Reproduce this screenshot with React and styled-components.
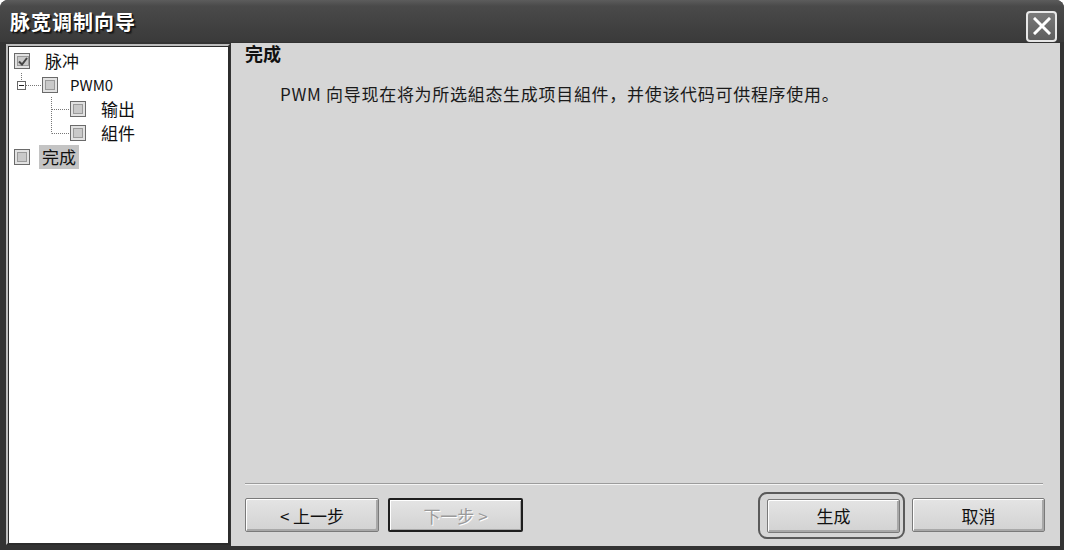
import React from 'react';
import styled, { createGlobalStyle } from 'styled-components';

const GlobalStyle = createGlobalStyle`
    body {
        margin: 0;
        background: #ffffff;
        font-family: "Noto Sans CJK SC", "Noto Sans", sans-serif;
    }
`

const Window = styled.div`
    width: 1064px;
    height: 550px;
    display: flex;
    flex-direction: column;
    background: #333333;
    border-radius: 8px 8px 0 0;
    overflow: hidden;
`

const TitleBar = styled.div`
    height: 42px;
    display: flex;
    align-items: center;
    justify-content: space-between;
    padding: 0 7px 0 10px;
    background: linear-gradient(#5c5c5c 0px, #4a4a4a 6px, #414141 60%, #3a3a3a 100%);
    box-sizing: border-box;
`

const Title = styled.div`
    color: #ffffff;
    font-size: 20px;
    font-weight: bold;
    text-shadow: 1px 1px 0 #111111, 2px 2px 1px #222222;
    letter-spacing: 1px;
`

const CloseButton = styled.div`
    width: 31px;
    height: 31px;
    box-sizing: border-box;
    border: 2px solid #e8e8e8;
    border-radius: 4px;
    background: linear-gradient(#7a7a7a, #5e5e5e);
    display: flex;
    align-items: center;
    justify-content: center;
    margin-top: 10px;
`

const Body = styled.div`
    flex: 1;
    display: flex;
    padding: 1px 4px 4px 5px;
    min-height: 0;
`

const TreePane = styled.div`
    width: 224px;
    box-sizing: border-box;
    background: #ffffff;
    border: 2px solid #2c2c2c;
    border-top-color: #bdbdbd;
    border-left-color: #bdbdbd;
    box-shadow: inset 1px 1px 0 #2c2c2c;
    padding: 3px 0 0 6px;
    margin: 1px;
`

const Row = styled.div`
    height: 24px;
    display: flex;
    align-items: center;
`

const Gutter = styled.svg`
    flex: none;
    display: block;
`

const Box = styled.div`
    flex: none;
    width: 16px;
    height: 16px;
    box-sizing: border-box;
    border: 1px solid #6a6a6a;
    background: #e2e2e2;
    padding: 2px;
    display: flex;
`

const BoxInner = styled.div`
    flex: 1;
    border: 1px solid #9a9a9a;
    background: #c9c9c9;
    display: flex;
    align-items: center;
    justify-content: center;
`

const Label = styled.span`
    margin-left: ${({ $gap }) => $gap || 12}px;
    font-size: ${({ $latin }) => ($latin ? 15 : 17)}px;
    color: #111111;
    line-height: 24px;
    padding: 0 3px;
    background: ${({ $selected }) => ($selected ? '#c4c4c4' : 'transparent')};
`

const Content = styled.div`
    flex: 1;
    display: flex;
    flex-direction: column;
    background: #d6d6d6;
    padding: 0 15px 7px 14px;
`

const Heading = styled.div`
    font-size: 18px;
    font-weight: bold;
    color: #111111;
    line-height: 24px;
    margin-top: -2px;
`

const Message = styled.div`
    margin: 17px 0 0 35px;
    font-size: 17px;
    letter-spacing: 0.7px;
    color: #1a1a1a;
    line-height: 24px;
`

const Spacer = styled.div`
    flex: 1;
`

const Separator = styled.div`
    height: 0;
    border-top: 1px solid #9c9c9c;
    border-bottom: 1px solid #f4f4f4;
    margin-right: 2px;
`

const ButtonRow = styled.div`
    display: flex;
    align-items: center;
    margin-top: 6px;
    height: 48px;
`

const Button = styled.div`
    width: ${({ $w }) => $w || 134}px;
    height: 34px;
    box-sizing: border-box;
    display: flex;
    align-items: center;
    justify-content: center;
    font-size: 17px;
    background: linear-gradient(#e4e4e4, #d2d2d2);
    border: 1px solid #7a7a7a;
    border-radius: 2px;
    box-shadow: inset 1px 1px 0 #ffffff, inset -2px -2px 0 #a8a8a8;
    color: ${({ $disabled }) => ($disabled ? '#9a9a9a' : '#111111')};
    text-shadow: ${({ $disabled }) => ($disabled ? '1px 1px 0 #ffffff' : 'none')};
    margin-left: ${({ $ml }) => $ml || 0}px;
    ${({ $disabled }) => $disabled && `
        border: 2px solid #1e1e1e;
        box-shadow: inset 1px 1px 0 #ffffff, inset -1px -1px 0 #a8a8a8;
    `}
`

const FocusRing = styled.div`
    margin-left: auto;
    padding: 5px 3px 4px 7px;
    border: 2px solid #5a5a5a;
    border-radius: 9px;
    display: flex;
`

const CheckBox = ({ checked }) => (
    <Box>
        <BoxInner>
            {checked && (
                <svg width="10" height="9" viewBox="0 0 10 9">
                    <path d="M1 4.5 L4 7.5 L9 1" fill="none" stroke="#444" strokeWidth="2" />
                </svg>
            )}
        </BoxInner>
    </Box>
)

const App = () => {
    return (
        <>
            <GlobalStyle />
            <Window>
                <TitleBar>
                    <Title>脉宽调制向导</Title>
                    <CloseButton>
                        <svg width="18" height="18" viewBox="0 0 18 18">
                            <path d="M2 2 L16 16 M16 2 L2 16" stroke="#ffffff" strokeWidth="3" strokeLinecap="square" />
                        </svg>
                    </CloseButton>
                </TitleBar>
                <Body>
                    <TreePane>
                        <Row>
                            <CheckBox checked />
                            <Label>脉冲</Label>
                        </Row>
                        <Row>
                            <Gutter width="28" height="24" viewBox="0 0 28 24">
                                <path d="M7.5 0 V8" stroke="#777" strokeDasharray="1 1" />
                                <rect x="3.5" y="8.5" width="8" height="8" fill="#fff" stroke="#666" />
                                <path d="M5 12.5 H10" stroke="#222" />
                                <path d="M12 12.5 H28" stroke="#777" strokeDasharray="1 1" />
                            </Gutter>
                            <CheckBox />
                            <Label $latin $gap={9}>PWM0</Label>
                        </Row>
                        <Row>
                            <Gutter width="56" height="24" viewBox="0 0 56 24">
                                <path d="M37.5 0 V24 M38 12.5 H56" stroke="#777" strokeDasharray="1 1" />
                            </Gutter>
                            <CheckBox />
                            <Label>输出</Label>
                        </Row>
                        <Row>
                            <Gutter width="56" height="24" viewBox="0 0 56 24">
                                <path d="M37.5 0 V12.5 M38 12.5 H56" stroke="#777" strokeDasharray="1 1" />
                            </Gutter>
                            <CheckBox />
                            <Label>組件</Label>
                        </Row>
                        <Row>
                            <CheckBox />
                            <Label $gap={9} $selected>完成</Label>
                        </Row>
                    </TreePane>
                    <Content>
                        <Heading>完成</Heading>
                        <Message>PWM 向导现在将为所选組态生成项目組件，并使该代码可供程序使用。</Message>
                        <Spacer />
                        <Separator />
                        <ButtonRow>
                            <Button>&lt; 上一步</Button>
                            <Button $disabled $ml={9} $w={135}>下一步 &gt;</Button>
                            <FocusRing>
                                <Button $w={133}>生成</Button>
                            </FocusRing>
                            <Button $ml={7} $w={133}>取消</Button>
                        </ButtonRow>
                    </Content>
                </Body>
            </Window>
        </>
    );
}

export default App;
